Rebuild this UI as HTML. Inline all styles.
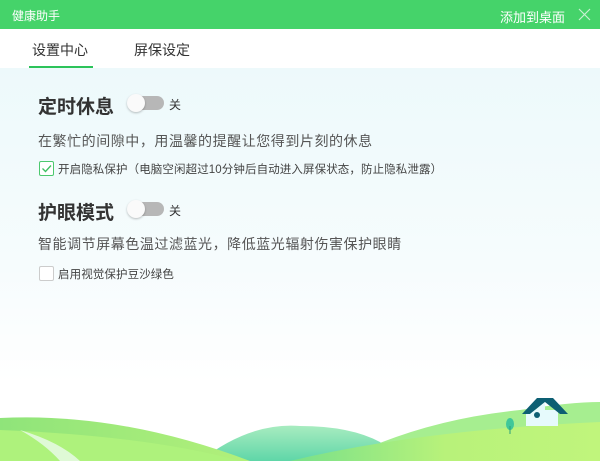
<!DOCTYPE html>
<html><head><meta charset="utf-8"><style>
*{margin:0;padding:0;box-sizing:border-box}
body{width:600px;height:461px;overflow:hidden;font-family:"Liberation Sans","Noto Sans CJK SC",sans-serif;background:#fff;position:relative}
.title{position:absolute;left:0;top:0;width:600px;height:29px;background:#45d36a;color:#fff;font-size:12px}
.title .l{position:absolute;left:12px;top:7px}
.title .r{position:absolute;left:500px;top:7px;font-size:13px}
.tabs{position:absolute;top:29px;left:0;width:600px;height:39px;background:#fff}
.tab{position:absolute;top:11px;font-size:14px;color:#333}
.ul{position:absolute;left:29px;top:37px;width:64px;height:2px;background:#2cc35a}
.content{position:absolute;top:68px;left:0;width:600px;height:393px;background:linear-gradient(#edf9fb,#f6fcfd 50%,#fff 80%)}
.h{position:absolute;left:38px;font-size:19px;font-weight:bold;color:#333}
.tg{position:absolute;left:130px;width:34px;height:14px;border-radius:7px;background:#b7b7b7}
.tg:before{content:"";position:absolute;left:-3px;top:-2px;width:18px;height:18px;border-radius:50%;background:#fafafa;box-shadow:0 1px 2px rgba(0,0,0,.25)}
.off{position:absolute;left:169px;font-size:12px;color:#333}
.d{position:absolute;left:38px;font-size:14px;letter-spacing:0.55px;color:#555}
.cb{position:absolute;left:39px;width:15px;height:15px;border:1px solid #ccc;border-radius:2px;background:#fff}
.cb.on{border-color:#4cc86e}
.ct{position:absolute;left:58px;font-size:11.5px;letter-spacing:0.1px;color:#444}
</style></head><body>
<div class="title"><span class="l">健康助手</span><span class="r">添加到桌面</span>
<svg style="position:absolute;left:578px;top:8px" width="13" height="13"><path d="M1 1L12 12M12 1L1 12" stroke="#c8f0d2" stroke-width="1.2"/></svg></div>
<div class="tabs"><span class="tab" style="left:32px">设置中心</span><span class="tab" style="left:134px">屏保设定</span><div class="ul"></div></div>
<div class="content">
<div class="h" style="top:24px">定时休息</div><div class="tg" style="top:28px"></div><div class="off" style="top:28px">关</div>
<div class="d" style="top:63px">在繁忙的间隙中，用温馨的提醒让您得到片刻的休息</div>
<div class="cb on" style="top:93px"><svg width="13" height="13" style="position:absolute;left:0;top:0"><path d="M2.5 6.5L5.5 9.5L11 3.5" stroke="#3cbf60" stroke-width="1.3" fill="none"/></svg></div>
<div class="ct" style="top:93px">开启隐私保护（电脑空闲超过10分钟后自动进入屏保状态，防止隐私泄露）</div>
<div class="h" style="top:130px">护眼模式</div><div class="tg" style="top:134px"></div><div class="off" style="top:134px">关</div>
<div class="d" style="top:166px">智能调节屏幕色温过滤蓝光，降低蓝光辐射伤害保护眼睛</div>
<div class="cb" style="top:198px"></div>
<div class="ct" style="top:198px">启用视觉保护豆沙绿色</div>
</div>
<svg style="position:absolute;left:0;top:360px" width="600" height="101" viewBox="0 0 600 101">
<defs>
<linearGradient id="g1" x1="0" x2="1"><stop offset="0" stop-color="#8fe47a"/><stop offset="1" stop-color="#b2f07a"/></linearGradient>
<linearGradient id="g2" x1="0" y1="0" x2="0" y2="1"><stop offset="0" stop-color="#a8ecc0"/><stop offset="1" stop-color="#5fd6a8"/></linearGradient>
<linearGradient id="g3" x1="0" x2="1"><stop offset="0" stop-color="#78e08a"/><stop offset="0.5" stop-color="#b8f27a"/><stop offset="1" stop-color="#c0f57c"/></linearGradient>
</defs>
<path d="M340 101 Q420 60 520 50 Q570 42 600 42 L600 101Z" fill="#a6ee90"/>
<path d="M200 101 Q250 62 300 66 Q350 66 380 82 L400 101Z" fill="url(#g2)"/>
<path d="M0 58 Q120 52 250 101 L0 101Z" fill="url(#g1)"/>
<path d="M0 70 Q150 76 240 101 L0 101Z" fill="#aef27c"/>
<path d="M20 70 Q60 82 80 101 L60 101 Q45 84 20 70Z" fill="#dff9d6"/>
<path d="M290 101 Q420 70 600 62 L600 101Z" fill="url(#g3)"/>
<ellipse cx="510" cy="64" rx="4" ry="6" fill="#3fc79a"/><rect x="509.5" y="66" width="1" height="8" fill="#2a9f7a"/>
<rect x="526" y="50" width="32" height="16" fill="#e6fafc"/>
<path d="M522 54 L537 38 L553 38 L568 54 L560 54 L545 42 L530 54Z" fill="#0d5f73"/>
<path d="M530 54 L545 42 L545 50Z" fill="#e6fafc"/>
<rect x="534" y="52" width="6" height="6" rx="3" fill="#0d5f73"/>
</svg>
</body></html>
